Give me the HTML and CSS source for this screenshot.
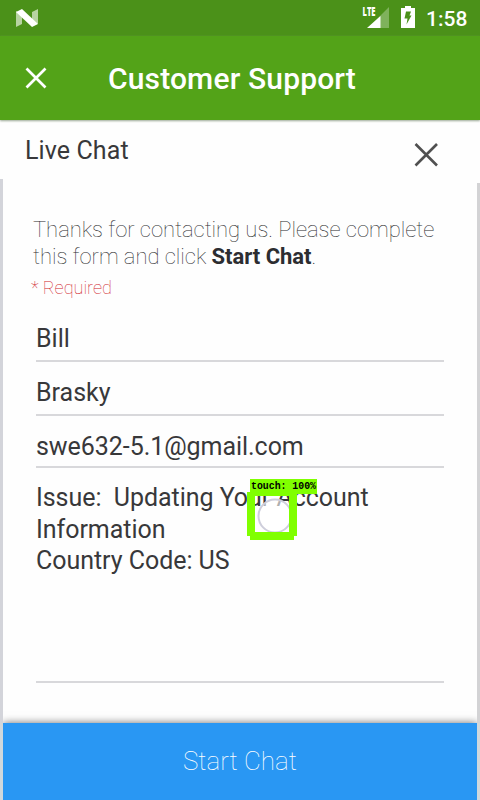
FILE: index.html
```html
<!DOCTYPE html>
<html lang="en">
<head>
<meta charset="utf-8">
<title>Customer Support</title>
<link rel="stylesheet" href="styles.css">
</head>
<body>
<div class="screen">
  <div class="status">
    <svg class="logo" width="22" height="19" viewBox="0 0 22 19"><path d="M0 2 6 6v9L0 18zM22 0l-6 3v9l6 3z" fill="#b7d3a1"/><path d="M0 3 6 0 22 15l-6 3z" fill="#fff"/></svg>
    <div class="tray">
      <svg class="signal" width="28" height="22" viewBox="0 0 28 22"><path d="M27 1v21H6z" fill="#7fb25c"/><path d="M18.500 10v12H5z" fill="#fff"/><path d="M0 0h14.500v10.500H0z" fill="#4b9119"/><text class="lte" x="0.500" y="10" textLength="13" lengthAdjust="spacingAndGlyphs">LTE</text></svg>
      <svg class="battery" width="14" height="22" viewBox="0 0 14 22"><path d="M4 0h6v2h4v20H0V2h4z" fill="#fff"/><path d="M5 5.500H10L8.500 9.500H10.500L5.500 18.500 6.500 12.500H3.500z" fill="#4b9119"/></svg>
      <span class="clock">1:58</span>
    </div>
  </div>
  <header class="appbar">
    <svg width="22" height="22" viewBox="0 0 22 22"><path d="M1.500 1.500 20.500 20.500M20.500 1.500 1.500 20.500" stroke="#fff" stroke-width="2.700"/></svg>
    <h1>Customer Support</h1>
  </header>
  <div class="chathead">
    <h2>Live Chat</h2>
    <svg width="24" height="24" viewBox="0 0 24 24"><path d="M1.500 1 23 22.500M23 1 1.500 22.500" stroke="#505050" stroke-width="2.600"/></svg>
  </div>
  <main class="panel">
    <i class="rail"></i>
    <form class="form">
      <p class="intro"><span class="line one">Thanks for contacting us. Please complete</span><span class="line two">this form and click <b>Start Chat</b>.</span></p>
      <p class="required">* Required</p>
      <div class="field first">Bill</div>
      <div class="field last">Brasky</div>
      <div class="field mail">swe632-5.1@gmail.com</div>
      <div class="issue">Issue:&nbsp; Updating Your Account<br>Information<br>Country Code: US</div>
    </form>
    <i class="rail right"></i>
  </main>
  <footer class="bottom"><div class="start">Start Chat</div></footer>
  <svg class="touch" width="72" height="62" viewBox="0 0 72 62"><circle cx="28" cy="37" r="16.500" fill="#fff" fill-opacity=".6" stroke="#cecedb" stroke-width="2"/><path d="M3 0h67v15H50v42h-3v4H3v-4H0V13h3zM8 17v36h34V17z" fill="#80ff00" fill-rule="evenodd"/><text x="4" y="10" textLength="65" lengthAdjust="spacingAndGlyphs" xml:space="preserve">touch: 100%</text></svg>
</div>
</body>
</html>
```
FILE: styles.css
```css
* { box-sizing: border-box; }
body { margin: 0; font-family: Roboto, sans-serif; background: #fefefe; color: #38383a; }
h1, h2, p { margin: 0; }
svg { display: block; flex: none; }
.screen { position: relative; width: 480px; height: 800px; overflow: hidden; display: flex; flex-direction: column; }
.status { height: 36px; flex: none; background: #4b9119; display: flex; justify-content: space-between; padding: 0 12px 0 16px; }
.logo { margin-top: 9px; }
.tray { display: flex; padding-top: 6px; }
.signal { overflow: visible; }
.battery { margin-left: 11px; }
.clock { width: 42px; margin-left: 11px; color: #fff; font-size: 21px; font-weight: 500; line-height: 27px; white-space: nowrap; }
.lte { font: 800 12px "Open Sans", sans-serif; fill: #fff; }
.appbar { height: 84px; flex: none; background: #53a318; display: flex; align-items: center; padding-left: 25px; box-shadow: 0 1px 2px #9aa794; z-index: 1; }
.appbar h1 { margin: 2px 0 0 61px; color: #fff; font-size: 30px; font-weight: 500; line-height: 36px; letter-spacing: .15px; white-space: nowrap; }
.chathead { height: 59px; flex: none; display: flex; justify-content: space-between; padding: 15px 42px 0 25px; }
.chathead h2 { margin-top: 1px; font-size: 25px; font-weight: 400; line-height: 30px; letter-spacing: .1px; }
.chathead svg { margin-top: 8px; }
.panel { height: 544px; flex: none; display: flex; }
.rail { width: 3px; background: #d3d4da; }
.right { margin-top: 4px; background: #d3d3d5; }
.form { flex: 1; padding: 37px 33px 0 30px; }
.intro { font-size: 22px; font-weight: 100; line-height: 27px; letter-spacing: -.03px; color: #2c2c2e; }
.line { display: block; white-space: nowrap; }
.intro b { font-weight: 700; color: #2c2d31; }
.required { margin: 8px 0 0 -2px; font-size: 18px; font-weight: 100; line-height: 20px; color: #d0252c; }
.field { margin-left: 3px; border-bottom: 2px solid #d8d8db; font-size: 25px; line-height: 30px; white-space: nowrap; }
.first { height: 64px; padding-top: 26px; }
.last { height: 54px; padding-top: 16px; }
.mail { height: 52px; padding-top: 16px; letter-spacing: -.05px; }
.issue { height: 215px; margin-left: 3px; padding-top: 14px; border-bottom: 2px solid #d8d8db; font-size: 25px; line-height: 31.500px; letter-spacing: -.04px; white-space: nowrap; }
.bottom { height: 77px; flex: none; padding: 0 3px; background: #d0d8dc; }
.start { height: 77px; background: #2997f3; color: #fff; font-size: 26px; font-weight: 100; line-height: 77px; text-align: center; box-shadow: 0 0 8px #6e6e6e; clip-path: inset(-12px 0 0 0); }
.touch { position: absolute; left: 247px; top: 479px; overflow: visible; }
.touch text { font: 700 11px "Liberation Mono", monospace; fill: #000; }
```
